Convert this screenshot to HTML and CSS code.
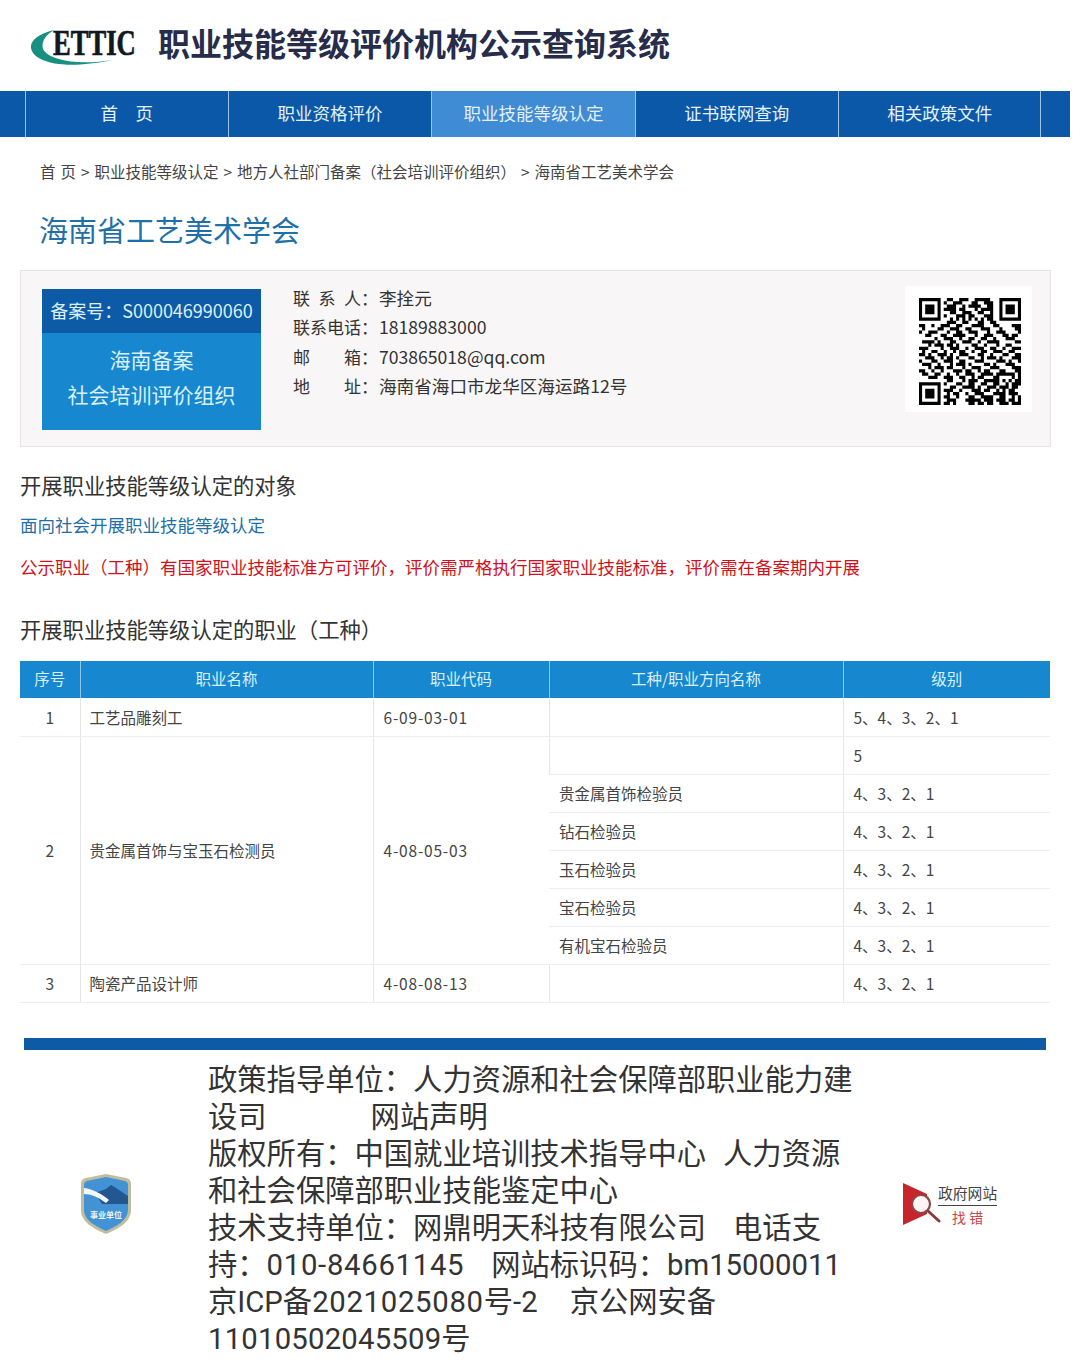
FILE: index.html
```html
<!DOCTYPE html>
<html lang="zh-CN">
<head>
  <meta charset="UTF-8">
  <meta name="viewport" content="width=device-width, initial-scale=1.0">
  <title>职业技能等级评价机构公示查询系统</title>
  <link rel="stylesheet" href="styles.css">
</head>
<body>
  <div class="header">
    <svg class="logo" viewBox="0 0 112 42" width="112" height="42">
      <path d="M24 3 C8 7 0 14 1 21 C3 34 30 44 82 33 C50 39 18 33 13 22 C11 14 16 8 24 3 Z" fill="#17907f"/>
      <text transform="translate(23 28) scale(.76 1)" class="logo-text">ETTIC</text>
    </svg>
    <h1 class="site-title">职业技能等级评价机构公示查询系统</h1>
  </div>

  <div class="nav">
    <a class="nav-item">首　页</a>
    <a class="nav-item">职业资格评价</a>
    <a class="nav-item active">职业技能等级认定</a>
    <a class="nav-item">证书联网查询</a>
    <a class="nav-item">相关政策文件</a>
  </div>

  <div class="crumbs">首 页 &gt; 职业技能等级认定 &gt; 地方人社部门备案（社会培训评价组织） &gt; 海南省工艺美术学会</div>
  <h2 class="org-name">海南省工艺美术学会</h2>

  <div class="card">
    <div class="badge">
      <div class="badge-no">备案号：S000046990060</div>
      <div class="badge-body">海南备案<br>社会培训评价组织</div>
    </div>
    <div class="info">
      <div class="info-row"><span class="info-label">联 系 人</span>：<span class="info-value">李拴元</span></div>
      <div class="info-row"><span class="info-label">联系电话</span>：<span class="info-value">18189883000</span></div>
      <div class="info-row"><span class="info-label">邮 箱</span>：<span class="info-value">703865018@qq.com</span></div>
      <div class="info-row"><span class="info-label">地 址</span>：<span class="info-value">海南省海口市龙华区海运路12号</span></div>
    </div>
    <div class="qr">
      <svg viewBox="0 0 33 33" width="102" height="107" preserveAspectRatio="none">
        <path fill="#000" fill-rule="evenodd" d="M0 0h7v7h-7zM1 1h5v5h-5zM2 2h3v3h-3zM26 0h7v7h-7zM27 1h5v5h-5zM28 2h3v3h-3zM0 26h7v7h-7zM1 27h5v5h-5zM2 28h3v3h-3z"/>
        <path stroke="#000" stroke-width="1" fill="none" d="M9 .5h2M13 .5h3M18 .5h5
          M8 1.5h1M11 1.5h3M17 1.5h2M21 1.5h3
          M9 2.5h3M14 2.5h1M16 2.5h4M22 2.5h2
          M8 3.5h4M13 3.5h2M18 3.5h1M20 3.5h4
          M10 4.5h2M14 4.5h3M19 4.5h2M23 4.5h1
          M8 5.5h1M12 5.5h3M16 5.5h2M21 5.5h3
          M10 6.5h1M12 6.5h1M14 6.5h1M16 6.5h1M18 6.5h1M20 6.5h1M22 6.5h2
          M9 7.5h3M14 7.5h2M19 7.5h2M23 7.5h2
          M0 8.5h2M4 8.5h1M7 8.5h3M12 8.5h2M17 8.5h4M24 8.5h2M30 8.5h3
          M1 9.5h1M6 9.5h2M10 9.5h3M15 9.5h2M20 9.5h3M26 9.5h1M31 9.5h2
          M0 10.5h1M3 10.5h3M9 10.5h1M12 10.5h2M16 10.5h3M22 10.5h1M25 10.5h3M32 10.5h1
          M2 11.5h2M7 11.5h2M11 11.5h4M18 11.5h1M21 11.5h3M27 11.5h2M30 11.5h2
          M5 12.5h1M8 12.5h3M13 12.5h1M16 12.5h2M20 12.5h2M24 12.5h1M28 12.5h3
          M1 13.5h4M6 13.5h1M10 13.5h2M14 13.5h3M19 13.5h1M22 13.5h4M31 13.5h2
          M3 14.5h1M5 14.5h3M9 14.5h2M12 14.5h1M17 14.5h2M21 14.5h1M25 14.5h1M28 14.5h2
          M0 15.5h3M7 15.5h1M10 15.5h3M15 15.5h1M18 15.5h3M23 15.5h2M27 15.5h1M30 15.5h3
          M1 16.5h1M4 16.5h2M8 16.5h1M11 16.5h1M13 16.5h2M17 16.5h1M20 16.5h2M24 16.5h3M29 16.5h2
          M0 17.5h2M3 17.5h1M6 17.5h3M10 17.5h1M13 17.5h3M19 17.5h2M23 17.5h1M27 17.5h2M31 17.5h2
          M2 18.5h3M7 18.5h1M9 18.5h2M12 18.5h1M16 18.5h2M20 18.5h1M22 18.5h3M26 18.5h1M30 18.5h3
          M0 19.5h1M4 19.5h2M8 19.5h3M13 19.5h2M18 19.5h3M25 19.5h3M29 19.5h1M32 19.5h1
          M1 20.5h3M6 20.5h1M10 20.5h1M12 20.5h3M16 20.5h1M21 20.5h2M24 20.5h1M28 20.5h3
          M3 21.5h1M5 21.5h3M9 21.5h2M14 21.5h1M17 21.5h3M23 21.5h3M30 21.5h3
          M0 22.5h2M4 22.5h1M7 22.5h1M11 22.5h3M15 22.5h2M19 22.5h1M21 22.5h2M26 22.5h2M31 22.5h2
          M1 23.5h2M5 23.5h2M9 23.5h1M12 23.5h1M15 23.5h3M20 23.5h4M25 23.5h6M32 23.5h1
          M3 24.5h3M8 24.5h3M13 24.5h2M17 24.5h1M19 24.5h2M24 24.5h2M30 24.5h1M32 24.5h1
          M9 25.5h2M14 25.5h1M16 25.5h3M21 25.5h5M27 25.5h1M29 25.5h1M31 25.5h2
          M8 26.5h1M12 26.5h2M16 26.5h2M20 26.5h2M24 26.5h2M28 26.5h1M30 26.5h3
          M10 27.5h2M14 27.5h4M19 27.5h1M22 27.5h3M26 27.5h3M30 27.5h2
          M8 28.5h3M13 28.5h1M17 28.5h3M21 28.5h2M25 28.5h1M27 28.5h1M29 28.5h2
          M9 29.5h1M11 29.5h2M15 29.5h1M18 29.5h3M24 29.5h4M29 29.5h3
          M8 30.5h2M12 30.5h1M16 30.5h2M20 30.5h4M26 30.5h2M30 30.5h1M32 30.5h1
          M9 31.5h3M15 31.5h5M21 31.5h3M25 31.5h3M29 31.5h2M32 31.5h1
          M8 32.5h2M11 32.5h1M16 32.5h2M19 32.5h2M22 32.5h2M26 32.5h3M30 32.5h3"/>
      </svg>
    </div>
  </div>

  <h3 class="sub-title first">开展职业技能等级认定的对象</h3>
  <p class="target">面向社会开展职业技能等级认定</p>
  <p class="notice">公示职业（工种）有国家职业技能标准方可评价，评价需严格执行国家职业技能标准，评价需在备案期内开展</p>
  <h3 class="sub-title second">开展职业技能等级认定的职业（工种）</h3>

  <table class="jobs">
    <colgroup>
      <col class="col-no"><col class="col-name"><col class="col-code"><col class="col-type"><col class="col-level">
    </colgroup>
    <thead>
      <tr><th>序号</th><th>职业名称</th><th>职业代码</th><th>工种/职业方向名称</th><th>级别</th></tr>
    </thead>
    <tbody>
      <tr><td class="center">1</td><td>工艺品雕刻工</td><td class="code">6-09-03-01</td><td class="type"></td><td class="type">5、4、3、2、1</td></tr>
      <tr><td class="center" rowspan="6">2</td><td rowspan="6">贵金属首饰与宝玉石检测员</td><td class="code" rowspan="6">4-08-05-03</td><td class="type"></td><td class="type">5</td></tr>
      <tr><td class="type">贵金属首饰检验员</td><td class="type">4、3、2、1</td></tr>
      <tr><td class="type">钻石检验员</td><td class="type">4、3、2、1</td></tr>
      <tr><td class="type">玉石检验员</td><td class="type">4、3、2、1</td></tr>
      <tr><td class="type">宝石检验员</td><td class="type">4、3、2、1</td></tr>
      <tr><td class="type">有机宝石检验员</td><td class="type">4、3、2、1</td></tr>
      <tr><td class="center">3</td><td>陶瓷产品设计师</td><td class="code">4-08-08-13</td><td class="type"></td><td class="type">4、3、2、1</td></tr>
    </tbody>
  </table>

  <div class="footer-bar"></div>
  <div class="footer">
    <svg class="gov-badge" viewBox="0 0 52 60" width="52" height="60">
      <path d="M26 0 L46 4 Q51 5 51 10 V36 C51 48 38 55 26 60 C14 55 1 48 1 36 V10 Q1 5 6 4 Z" fill="#bdbda0"/>
      <path d="M26 3 L45 7 Q48 8 48 11 V36 C48 46 37 52 26 57 C15 52 4 46 4 36 V11 Q4 8 7 7 Z" fill="#4393d4"/>
      <path d="M15 19 L26 15 L31 11 L36 14 L48 22 V30 H22 Z" fill="#24568f"/>
      <path d="M4 14 C13 15 22 20 29 26 L26 29 C18 23 11 20 4 20 Z" fill="#f4f7fa"/>
      <text x="26" y="44" class="gov-badge-text">事业单位</text>
    </svg>
    <div class="footer-text">
      政策指导单位：人力资源和社会保障部职业能力建<br>
      设司<span class="gap-lg"></span>网站声明<br>
      版权所有：中国就业培训技术指导中心<span class="gap-sm"></span>人力资源<br>
      和社会保障部职业技能鉴定中心<br>
      技术支持单位：网鼎明天科技有限公司<span class="gap-md"></span>电话支<br>
      持：<span class="num">010-84661145</span><span class="gap-md"></span>网站标识码：bm15000011<br>
      京ICP备<span class="num">2021025080</span>号-2<span class="gap-xl"></span>京公网安备<br>
      <span class="num-last">11010502045509</span>号
    </div>
    <div class="report">
      <svg viewBox="0 0 40 44" width="40" height="44">
        <path d="M0 0 L24 11 V31 L0 42 Z" fill="#c9242b"/>
        <circle cx="18" cy="21" r="9" fill="#fdf6f5" stroke="#8a4848" stroke-width="2.2"/>
        <path d="M25 28 L36 38" stroke="#8a3a3a" stroke-width="3" stroke-linecap="round"/>
      </svg>
      <div class="report-text">
        <div class="report-top">政府网站</div>
        <div class="report-bottom">找 错</div>
      </div>
    </div>
  </div>
</body>
</html>
```

FILE: styles.css
```css
* {
  box-sizing: border-box;
}

body {
  margin: 0;
  width: 1080px;
  background: #fff;
  color: #333;
  font-family: "Noto Sans CJK SC", "Noto Sans", sans-serif;
}

.header {
  display: flex;
  align-items: center;
  height: 91px;
  padding-left: 30px;
}

.logo {
  flex: none;
  margin: 5px 16px 0 0;
}

.logo-text {
  font-family: "Liberation Serif", serif;
  font-size: 35px;
  font-weight: 700;
  fill: #12181f;
  stroke: #12181f;
  stroke-width: 0.7px;
}

.site-title {
  margin: 0 0 7px;
  font-size: 32px;
  line-height: 40px;
  font-weight: 700;
  color: #262c4a;
}

.nav {
  display: flex;
  width: 1070px;
  height: 46px;
  padding-left: 24.5px;
  background: #0b58a8;
}

.nav-item {
  width: 203.4px;
  border-left: 1px solid #9cc4e6;
  color: #e4f0fa;
  font-size: 17.5px;
  line-height: 43px;
  text-align: center;
}

.nav-item:last-child {
  border-right: 1px solid #9cc4e6;
}

.nav-item.active {
  background: #3f8bd4;
}

.crumbs {
  margin: 23px 0 0 40px;
  font-size: 15.5px;
  line-height: 23px;
  word-spacing: 1.5px;
  color: #444;
}

.org-name {
  margin: 26px 0 0 39px;
  font-size: 29px;
  line-height: 40px;
  font-weight: 400;
  color: #1f70a8;
}

.card {
  display: flex;
  width: 1031px;
  height: 177px;
  margin: 21px 0 0 20px;
  padding: 18px 18px 0 21px;
  background: #f8f6f6;
  border: 1px solid #e4e4e4;
}

.badge {
  flex: none;
  width: 219px;
  height: 141px;
  background: #1787d0;
  color: #d9f0fb;
  text-align: center;
}

.badge-no {
  height: 44px;
  background: #0d5aa7;
  font-size: 18px;
  line-height: 42px;
  white-space: nowrap;
}

.badge-body {
  padding-top: 9px;
  font-size: 21px;
  line-height: 35px;
}

.info {
  flex: 1;
  margin-left: 32px;
  margin-top: -6px;
  font-size: 17px;
  line-height: 29.3px;
  color: #333;
}

.info-row {
  display: flex;
  white-space: nowrap;
}

.info-label {
  width: 68px;
  text-align-last: justify;
}

.info-value {
  font-size: 17.6px;
  margin-left: 1px;
}

.qr {
  display: flex;
  align-items: center;
  justify-content: center;
  flex: none;
  width: 127px;
  height: 126px;
  margin-top: -3px;
  padding: 4px 0 0 2px;
  background: #fff;
}

.sub-title {
  margin: 0 0 0 20px;
  font-size: 21.3px;
  line-height: 30px;
  font-weight: 400;
  color: #333;
}

.sub-title.first {
  margin-top: 23px;
}

.sub-title.second {
  margin-top: 34px;
}

.target,
.notice {
  margin: 0 0 0 20px;
  font-size: 17.5px;
  line-height: 26px;
}

.target {
  margin-top: 12px;
  color: #1f70a8;
}

.notice {
  margin-top: 16px;
  color: #d0101c;
  white-space: nowrap;
}

.jobs {
  width: 1030px;
  margin: 17px 0 0 20px;
  border-collapse: collapse;
  table-layout: fixed;
  font-size: 15.5px;
}

.col-no { width: 60px; }
.col-name { width: 293px; }
.col-code { width: 176px; }
.col-type { width: 294px; }
.col-level { width: 207px; }

.jobs th {
  height: 37px;
  padding: 0 0 3px;
  background: #1787d0;
  border-left: 1px solid #8cc8ee;
  color: #d9f0fb;
  font-weight: 400;
}

.jobs th:first-child {
  border-left: none;
}

.jobs td {
  height: 38px;
  padding: 0 9px;
  border-bottom: 1px solid #eee;
  border-left: 1px solid #e6e6e6;
  color: #444;
}

.jobs td:first-child {
  border-left: none;
}

.jobs td.center {
  text-align: center;
}

.jobs td.code {
  padding-left: 10px;
  letter-spacing: 0.8px;
}

.jobs td.type {
  padding-left: 10px;
}

.footer-bar {
  width: 1022px;
  height: 12px;
  margin: 35px 0 0 24px;
  background: #0d5aa7;
}

.footer {
  display: flex;
  align-items: center;
  padding: 12px 0 0 80px;
}

.gov-badge {
  flex: none;
  margin: -11px 76px 0 0;
}

.gov-badge-text {
  font-size: 8px;
  font-weight: 700;
  fill: #eaf3fa;
  text-anchor: middle;
}

.footer-text {
  flex: none;
  width: 650px;
  font-family: Roboto, "Noto Sans CJK SC", sans-serif;
  font-size: 29.3px;
  line-height: 37px;
  white-space: nowrap;
  color: #333;
}

.num {
  letter-spacing: 0.7px;
}

.num-last {
  letter-spacing: 0.2px;
}

.gap-sm,
.gap-md,
.gap-lg,
.gap-xl {
  display: inline-block;
}

.gap-sm { width: 17px; }
.gap-md { width: 27px; }
.gap-xl { width: 32px; }
.gap-lg { width: 104px; }

.report {
  display: flex;
  flex: none;
  margin: -9px 0 0 45px;
}

.report-text {
  margin-left: -5px;
  text-align: center;
}

.report-top {
  padding-bottom: 2px;
  border-bottom: 1px solid #444;
  font-size: 14.8px;
  line-height: 20px;
  color: #444;
}

.report-bottom {
  padding-top: 1px;
  font-size: 14px;
  line-height: 20px;
  color: #c9424a;
}
```
